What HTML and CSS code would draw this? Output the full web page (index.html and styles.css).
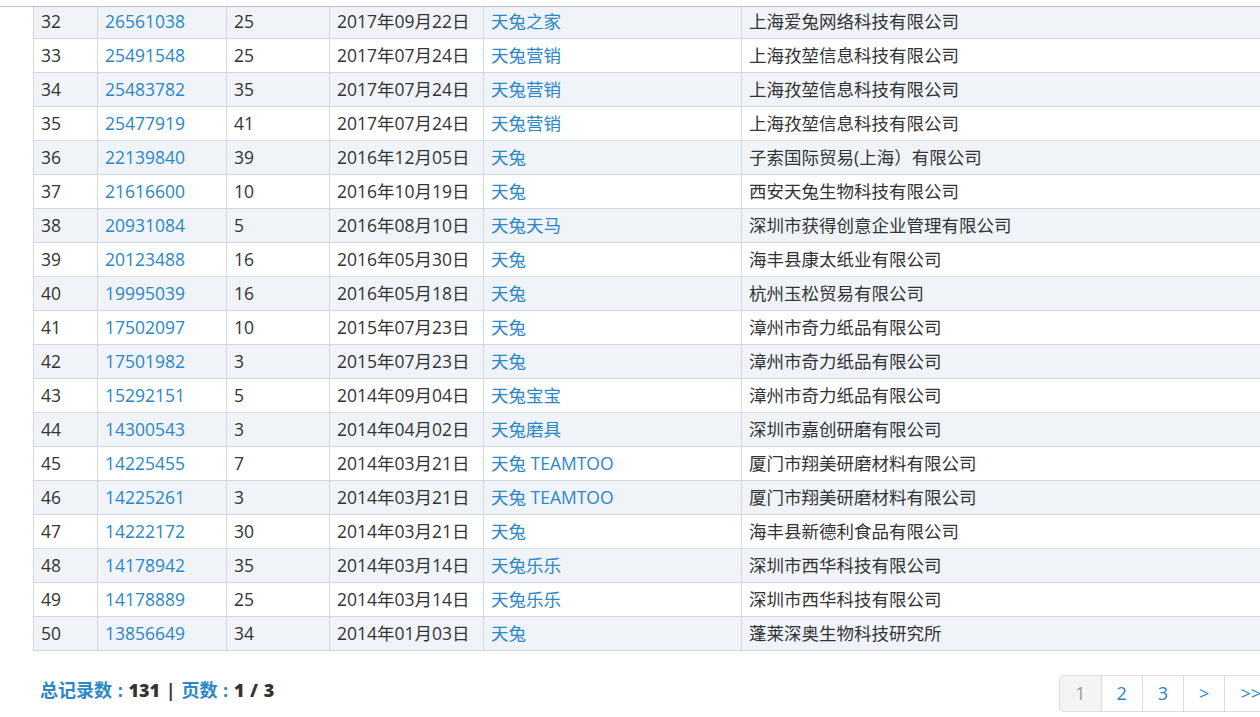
FILE: index.html
```html
<!DOCTYPE html>
<html lang="zh">
<head>
<meta charset="utf-8">
<link rel="stylesheet" href="styles.css">
</head>
<body>
<div class="topbar"></div>
<div class="page">
  <table class="list">
    <colgroup>
      <col class="c1"><col class="c2"><col class="c3"><col class="c4"><col class="c5"><col class="c6">
    </colgroup>
    <tbody>
      <tr class="alt"><td>32</td><td><a>26561038</a></td><td>25</td><td>2017年09月22日</td><td><a>天兔之家</a></td><td>上海爱兔网络科技有限公司</td></tr>
      <tr><td>33</td><td><a>25491548</a></td><td>25</td><td>2017年07月24日</td><td><a>天兔营销</a></td><td>上海孜堃信息科技有限公司</td></tr>
      <tr class="alt"><td>34</td><td><a>25483782</a></td><td>35</td><td>2017年07月24日</td><td><a>天兔营销</a></td><td>上海孜堃信息科技有限公司</td></tr>
      <tr><td>35</td><td><a>25477919</a></td><td>41</td><td>2017年07月24日</td><td><a>天兔营销</a></td><td>上海孜堃信息科技有限公司</td></tr>
      <tr class="alt"><td>36</td><td><a>22139840</a></td><td>39</td><td>2016年12月05日</td><td><a>天兔</a></td><td>子索国际贸易(上海）有限公司</td></tr>
      <tr><td>37</td><td><a>21616600</a></td><td>10</td><td>2016年10月19日</td><td><a>天兔</a></td><td>西安天兔生物科技有限公司</td></tr>
      <tr class="alt"><td>38</td><td><a>20931084</a></td><td>5</td><td>2016年08月10日</td><td><a>天兔天马</a></td><td>深圳市获得创意企业管理有限公司</td></tr>
      <tr><td>39</td><td><a>20123488</a></td><td>16</td><td>2016年05月30日</td><td><a>天兔</a></td><td>海丰县康太纸业有限公司</td></tr>
      <tr class="alt"><td>40</td><td><a>19995039</a></td><td>16</td><td>2016年05月18日</td><td><a>天兔</a></td><td>杭州玉松贸易有限公司</td></tr>
      <tr><td>41</td><td><a>17502097</a></td><td>10</td><td>2015年07月23日</td><td><a>天兔</a></td><td>漳州市奇力纸品有限公司</td></tr>
      <tr class="alt"><td>42</td><td><a>17501982</a></td><td>3</td><td>2015年07月23日</td><td><a>天兔</a></td><td>漳州市奇力纸品有限公司</td></tr>
      <tr><td>43</td><td><a>15292151</a></td><td>5</td><td>2014年09月04日</td><td><a>天兔宝宝</a></td><td>漳州市奇力纸品有限公司</td></tr>
      <tr class="alt"><td>44</td><td><a>14300543</a></td><td>3</td><td>2014年04月02日</td><td><a>天兔磨具</a></td><td>深圳市嘉创研磨有限公司</td></tr>
      <tr><td>45</td><td><a>14225455</a></td><td>7</td><td>2014年03月21日</td><td><a>天兔 TEAMTOO</a></td><td>厦门市翔美研磨材料有限公司</td></tr>
      <tr class="alt"><td>46</td><td><a>14225261</a></td><td>3</td><td>2014年03月21日</td><td><a>天兔 TEAMTOO</a></td><td>厦门市翔美研磨材料有限公司</td></tr>
      <tr><td>47</td><td><a>14222172</a></td><td>30</td><td>2014年03月21日</td><td><a>天兔</a></td><td>海丰县新德利食品有限公司</td></tr>
      <tr class="alt"><td>48</td><td><a>14178942</a></td><td>35</td><td>2014年03月14日</td><td><a>天兔乐乐</a></td><td>深圳市西华科技有限公司</td></tr>
      <tr><td>49</td><td><a>14178889</a></td><td>25</td><td>2014年03月14日</td><td><a>天兔乐乐</a></td><td>深圳市西华科技有限公司</td></tr>
      <tr class="alt"><td>50</td><td><a>13856649</a></td><td>34</td><td>2014年01月03日</td><td><a>天兔</a></td><td>蓬莱深奥生物科技研究所</td></tr>
    </tbody>
  </table>
  <div class="footer">
    <div class="summary"><span class="lbl">总记录数 : </span><b>131</b> | <span class="lbl">页数 : </span><b>1 / 3</b></div>
    <ul class="pager">
      <li class="active">1</li>
      <li><a>2</a></li>
      <li><a>3</a></li>
      <li><a>&gt;</a></li>
      <li><a>&gt;&gt;</a></li>
    </ul>
  </div>
</div>
</body>
</html>
```
FILE: styles.css
```css
html, body {
  margin: 0;
  padding: 0;
  overflow: hidden;
  background: #fff;
}
body {
  font-family: "Open Sans", "Noto Sans CJK SC", sans-serif;
  color: #333;
  font-size: 17.5px;
}
.topbar {
  position: fixed;
  top: 0;
  left: 0;
  right: 0;
  height: 6px;
  background: #fff;
  border-bottom: 1px solid #bdbdbd;
  z-index: 2;
}
.page {
  padding: 4px 0 0 33px;
  width: 1244px;
}
.list {
  width: 1244px;
  border-collapse: collapse;
  table-layout: fixed;
}
.c1 { width: 64px; }
.c2 { width: 129px; }
.c3 { width: 103px; }
.c4 { width: 154px; }
.c5 { width: 258px; }
.list td {
  height: 31px;
  padding: 0 7px 2px;
  border: 1px solid #d4d7db;
  white-space: nowrap;
  line-height: 20px;
  vertical-align: middle;
}
.list tr.alt td {
  background: #f0f4f8;
}
.list a {
  color: #2b87c6;
}
.footer {
  display: flex;
  justify-content: space-between;
  align-items: flex-start;
  margin-top: 24px;
}
.summary {
  padding-left: 7px;
  font-size: 18px;
  line-height: 30px;
  font-weight: bold;
  color: #333;
  word-spacing: 1px;
}
.summary .lbl {
  color: #2b87c6;
}
.summary b {
  color: #333;
}
.pager {
  display: flex;
  list-style: none;
  margin: 0;
  padding: 0;
  font-size: 18px;
}
.pager li {
  height: 35px;
  line-height: 35px;
  padding: 0 15px;
  border: 1px solid #dcdcdc;
  margin-left: -1px;
  color: #2b87c6;
  background: #fff;
}
.pager li.active {
  background: #f4f4f4;
  color: #999;
  border-radius: 5px 0 0 5px;
  margin-left: 0;
}
```
